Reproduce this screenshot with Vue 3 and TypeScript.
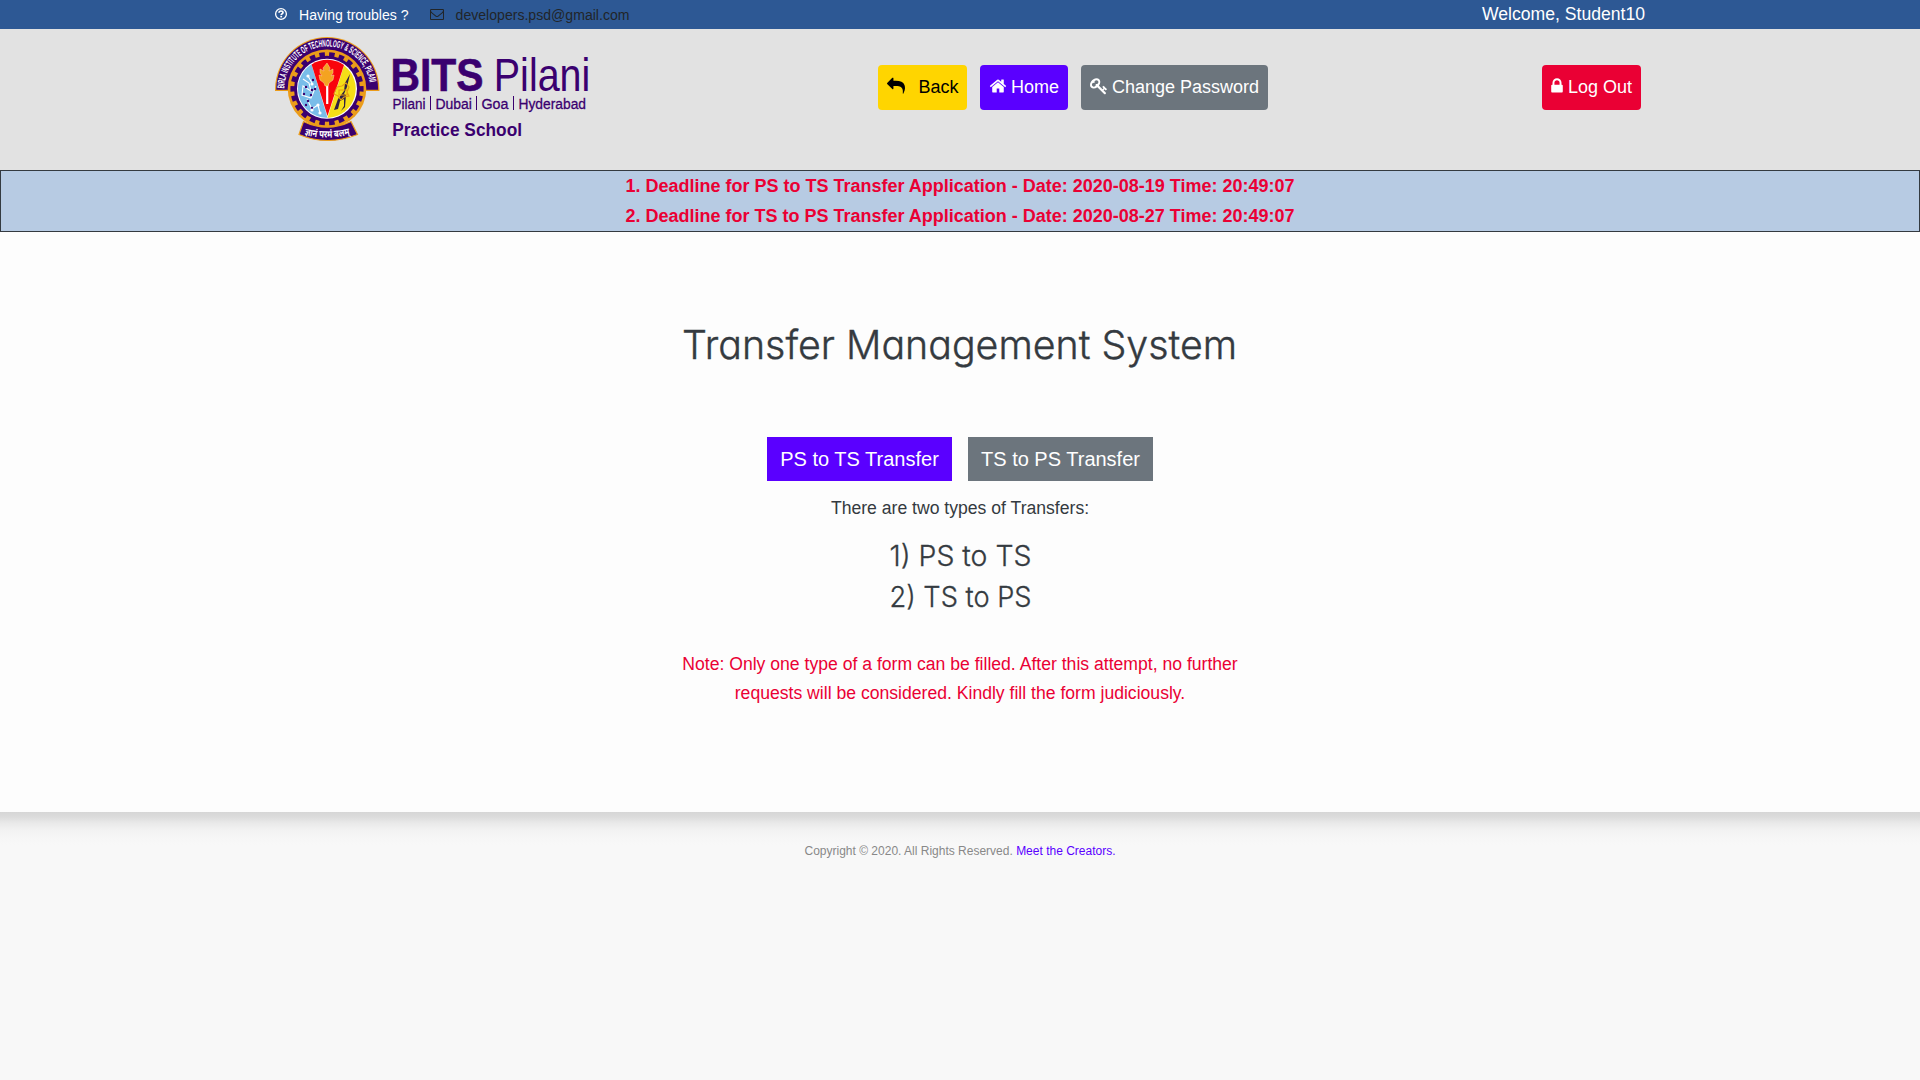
<script setup lang="ts">
interface NavButton {
  label: string
  icon: string
  kind: string
}

const icons = {
  reply:
    'M1792 1120q0 166-127 451-3 7-10.5 24t-13.5 30-13 22q-12 17-28 17-15 0-23.5-10t-8.5-25q0-9 2.5-26.5t2.5-23.5q5-68 5-123 0-101-17.5-181t-48.5-138.5-80-101-105.5-69.5-133-42.5-154-21.5-175.5-6h-224v256q0 26-19 45t-45 19-45-19l-512-512q-19-19-19-45t19-45l512-512q19-19 45-19t45 19 19 45v256h224q713 0 875 403 53 134 53 333z',
  home:
    'M1472 992v480q0 26-19 45t-45 19h-384v-384h-256v384h-384q-26 0-45-19t-19-45v-480q0-1 .5-3t.5-3l575-474 575 474q1 2 1 6zm223-69l-62 74q-8 9-21 11h-3q-13 0-21-7l-692-577-692 577q-12 8-24 7-13-2-21-11l-62-74q-8-10-7-23.5t11-21.5l719-599q32-26 76-26t76 26l244 204v-195q0-14 9-23t23-9h192q14 0 23 9t9 23v408l219 182q10 8 11 21.5t-7 23.5z',
  key:
    'M832 512q0-80-56-136t-136-56-136 56-56 136q0 42 19 83-41-19-83-19-80 0-136 56t-56 136 56 136 136 56 136-56 56-136q0-42-19-83 41 19 83 19 80 0 136-56t56-136zm851 704q0 17-49 66t-66 49q-9 0-28.5-16t-36.5-33-38.5-40-24.5-26l-96 96 220 220q28 28 28 68 0 42-39 81t-81 39q-40 0-68-28l-671-671q-176 131-365 131-163 0-265.5-102.5t-102.5-265.5q0-160 95-313t248-248 313-95q163 0 265.5 102.5t102.5 265.5q0 189-131 365l355 355 96-96q-3-3-26-24.5t-40-38.5-33-36.5-16-28.5q0-17 49-66t66-49q13 0 23 10 6 6 46 44.5t82 79.5 86.5 86 73 78 28.5 41z',
  lock:
    'M640 768h512v-192q0-106-75-181t-181-75-181 75-75 181v192zm832 96v576q0 40-28 68t-68 28h-960q-40 0-68-28t-28-68v-576q0-40 28-68t68-28h32v-192q0-184 132-316t316-132 316 132 132 316v192h32q40 0 68 28t28 68z',
  envelope:
    'M1664 1504v-768q-32 36-69 66-268 206-426 338-51 43-83 67t-86.5 48.5-102.5 24.5h-2q-48 0-102.5-24.5t-86.5-48.5-83-67q-158-132-426-338-37-30-69-66v768q0 13 9.5 22.5t22.5 9.5h1472q13 0 22.5-9.5t9.5-22.5zm0-1051v-24.5l-.5-13-3-12.5-5.5-9-9-7.5-14-2.5h-1472q-13 0-22.5 9.5t-9.5 22.5q0 168 147 284 193 152 401 317 6 5 35 29.5t46 37.5 44.5 31.5 50.5 27.5 43 9h2q20 0 43-9t50.5-27.5 44.5-31.5 46-37.5 35-29.5q208-165 401-317 54-43 100.5-115.5t46.5-131.5zm128-37v1088q0 66-47 113t-113 47h-1472q-66 0-113-47t-47-113v-1088q0-66 47-113t113-47h1472q66 0 113 47t47 113z',
}

const navButtons: NavButton[] = [
  { label: 'Back', icon: icons.reply, kind: 'back' },
  { label: 'Home', icon: icons.home, kind: 'home' },
  { label: 'Change Password', icon: icons.key, kind: 'password' },
]

const deadlines: string[] = [
  '1. Deadline for PS to TS Transfer Application - Date: 2020-08-19 Time: 20:49:07',
  '2. Deadline for TS to PS Transfer Application - Date: 2020-08-27 Time: 20:49:07',
]
</script>

<template>
  <div class="page">
    <div class="topbar">
      <div class="contact">
        <svg class="i-question" viewBox="0 0 14 14">
          <circle cx="7" cy="7" r="5.4" fill="none" stroke="currentColor" stroke-width="1.3" />
          <path d="M5 5.8C5.1 4.5 6 4 7 4c1.2 0 2 .7 2 1.6C9 6.8 7.2 6.8 7.2 8.1" fill="none" stroke="currentColor" stroke-width="1.7" />
          <rect x="6.3" y="8.8" width="1.8" height="1.6" fill="currentColor" />
        </svg>
        <span class="troubles">Having troubles ?</span>
        <svg class="i-mail" viewBox="0 0 1792 1792"><path :d="icons.envelope" fill="currentColor" /></svg>
        <span class="mail">developers.psd@gmail.com</span>
      </div>
      <span class="welcome">Welcome, Student10</span>
    </div>

    <header class="header">
      <svg class="logo" viewBox="275 36 320 107">
        <path d="M275 91V89.5A52.2 52.5 0 0 1 379.4 89.5V91Z" fill="#eb9c1a" />
        <path d="M276.3 89.8V89A50.9 51 0 0 1 378.1 89V89.8Z" fill="#3a006f" />
        <path id="motto-arc" d="M284.2 89.5A43 43 0 0 1 370.2 89.5" fill="none" />
        <text class="arc-text"><textPath href="#motto-arc" startOffset="1" textLength="127" lengthAdjust="spacingAndGlyphs">BIRLA INSTITUTE OF TECHNOLOGY &amp; SCIENCE, PILANI</textPath></text>
        <circle cx="327" cy="88.8" r="39.3" fill="#eb9c1a" />
        <circle cx="327" cy="88.8" r="33.8" fill="none" stroke="#3a006f" stroke-width="5.6" pathLength="220" stroke-dasharray="5.6 4.4" stroke-dashoffset="2.8" />
        <circle cx="327" cy="88.8" r="33" fill="#3a006f" />
        <circle cx="327" cy="88.8" r="30" fill="#fff" />
        <path d="M327.5 117.8L311.5 64.2A29 29 0 0 0 326 117.7Z" fill="#79bde9" />
        <path d="M327.5 117.8L344 65.5A29 29 0 0 1 329 117.7Z" fill="#f5df17" />
        <path d="M327.5 116L311.6 64.4A29 29 0 0 1 344 65Z" fill="#f9040c" />
        <path d="M327.2 83V104" stroke="#fff" stroke-width="2.2" />
        <path d="M327 63l3 5-1 3 4-2v4l-2 3 3-1-1 5-4 3-1 3h-3l-1-3-4-3-1-5 3 1-2-3v-4l4 2-1-3z" fill="#f4a321" stroke="#fbd9a0" stroke-width=".5" />
        <path d="M303 79l6 4 2 8-8-5-1 9 9 3 5-12M308 76l4 7M307 99l5 10 6-4 2 8" fill="none" stroke="#fff" stroke-width="1.1" />
        <g fill="#3a006f"><circle cx="313" cy="80" r="1.2" /><circle cx="306" cy="87" r="1.2" /><circle cx="312" cy="90" r="1.3" /><circle cx="304" cy="94" r="1.2" /><circle cx="311" cy="95" r="1.2" /><circle cx="308" cy="101" r="1.2" /><circle cx="306" cy="105" r="1.2" /><circle cx="315" cy="89" r="1.2" /><circle cx="312" cy="108" r="1.2" /></g>
        <g fill="#fff"><circle cx="308" cy="76" r="1.6" /><circle cx="312" cy="84" r="1.6" /><circle cx="318" cy="105" r="1.6" /><circle cx="312" cy="110" r="1.6" /><circle cx="320" cy="113" r="1.6" /></g>
        <path d="M350 74l-5 9-1 8-6 8-4 11 4-1 2-8 4-2 0 7-3 5 4-4 1-12-2-1 3-7z" fill="#302143" />
        <path d="M337 87l5-1 4-3 3 4-2 5 2 4-5 1-3 3-3-4-4-2z M339 90h8v5h-8z" fill="none" stroke="#e69e12" stroke-width="1.1" />
        <path d="M303.500 121.5Q327 133 351 121.5L357.5 134.5Q327 146.5 299 134.5Z" fill="#3a006f" stroke="#eb9c1a" stroke-width="1.2" />
        <path id="banner-arc" d="M301.5 134Q327 141.5 354 133.5" fill="none" />
        <text class="banner-text"><textPath href="#banner-arc" startOffset="3" textLength="46" lengthAdjust="spacingAndGlyphs">ज्ञानं परमं बलम्</textPath></text>
        <g fill="#3a006f">
          <text x="390.500" y="91.2" font-size="45.5" font-weight="700" textLength="93" lengthAdjust="spacingAndGlyphs" class="bits">BITS</text>
          <text x="493.8" y="91.2" font-size="45.5" textLength="96.5" lengthAdjust="spacingAndGlyphs">Pilani</text>
          <text x="392.5" y="108.7" font-size="15.5" textLength="33" lengthAdjust="spacingAndGlyphs" class="city">Pilani</text>
          <text x="435.400" y="108.7" font-size="15.5" textLength="36.5" lengthAdjust="spacingAndGlyphs" class="city">Dubai</text>
          <text x="481.5" y="108.7" font-size="15.5" textLength="27" lengthAdjust="spacingAndGlyphs" class="city">Goa</text>
          <text x="518.500" y="108.7" font-size="15.5" textLength="67.500" lengthAdjust="spacingAndGlyphs" class="city">Hyderabad</text>
          <text x="392.3" y="136.4" font-size="18" font-weight="700" textLength="129.7" lengthAdjust="spacingAndGlyphs">Practice School</text>
        </g>
        <path d="M430.5 96v14M476.5 96v14M513.5 96v14" stroke="#3a006f" stroke-width="1" />
      </svg>

      <nav class="nav">
        <button v-for="b in navButtons" :key="b.kind" class="btn" :class="b.kind">
          <svg class="icon" viewBox="0 0 1792 1792"><path :d="b.icon" fill="currentColor" /></svg>
          <span>{{ b.label }}</span>
        </button>
      </nav>

      <button class="btn logout">
        <svg class="icon" viewBox="320 0 1152 1792"><path :d="icons.lock" fill="currentColor" /></svg>
        <span>Log Out</span>
      </button>
    </header>

    <div class="deadlines">
      <div v-for="d in deadlines" :key="d">{{ d }}</div>
    </div>

    <main class="main">
      <h1><svg width="556" height="60"><text x="0" y="42" textLength="555" lengthAdjust="spacingAndGlyphs">Transfer Management System</text></svg></h1>
      <div class="actions">
        <button class="to-ts">PS to TS Transfer</button>
        <button class="to-ps">TS to PS Transfer</button>
      </div>
      <p class="intro">There are two types of Transfers:</p>
      <h3>
        <svg width="144" height="41"><text x="1.5" y="29" textLength="142" lengthAdjust="spacingAndGlyphs">1) PS to TS</text></svg>
        <svg width="144" height="41"><text x="1.5" y="29" textLength="142" lengthAdjust="spacingAndGlyphs">2) TS to PS</text></svg>
      </h3>
      <p class="note">Note: Only one type of a form can be filled. After this attempt, no further<br />requests will be considered. Kindly fill the form judiciously.</p>
    </main>

    <footer class="footer">
      Copyright © 2020. All Rights Reserved. <a>Meet the Creators.</a>
    </footer>
  </div>
</template>

<style>
body {
  margin: 0;
  background: #f8f8f8;
}
</style>

<style scoped>
.page {
  width: 1920px;
  height: 1080px;
  overflow: hidden;
  display: flex;
  flex-direction: column;
  font-family: "Liberation Sans", Arial, sans-serif;
  font-size: 17.6px;
  color: #343a40;
}
.page * {
  box-sizing: border-box;
}
.topbar {
  height: 29px;
  flex: none;
  padding: 0 275px 0 274.5px;
  display: flex;
  justify-content: space-between;
  background: #2d5894;
  color: #fff;
}
.contact {
  display: flex;
  font-size: 14.08px;
  line-height: 30px;
}
.i-question {
  width: 14px;
  height: 14px;
  margin: 7px 11px 0 -0.5px;
}
.i-mail {
  width: 14px;
  height: 14px;
  margin: 7px 12px 0 21px;
  color: #212529;
}
.mail {
  color: #212529;
}
.welcome {
  line-height: 28px;
}
.header {
  height: 141px;
  flex: none;
  display: flex;
  align-items: flex-start;
  background: #e2e2e2;
}
.logo {
  width: 320px;
  height: 107px;
  margin: 7px 283px 0 275px;
  flex: none;
}
.arc-text {
  font: 700 10px "Liberation Sans Narrow", "Liberation Sans", sans-serif;
  fill: #fff;
}
.banner-text {
  font: 700 10px "Noto Sans Devanagari", "Noto Sans", sans-serif;
  fill: #fff;
}
.bits {
  stroke: #3a006f;
  stroke-width: 0.6px;
}
.city {
  stroke: #3a006f;
  stroke-width: 0.3px;
}
.nav {
  display: flex;
  gap: 13px;
  margin-top: 36px;
}
button {
  border: 0;
  padding: 0;
  font-family: inherit;
  color: #fff;
}
.btn {
  height: 45px;
  display: flex;
  align-items: flex-start;
  padding-left: 9px;
  border-radius: 4px;
  font-size: 18px;
  line-height: 44px;
  white-space: nowrap;
}
.icon {
  width: 18px;
  height: 18px;
  margin: 12px 4px 0 0;
}
.back {
  width: 89px;
  background: #ffd500;
  color: #000;
}
.back .icon {
  margin-right: 13.5px;
}
.home {
  width: 88px;
  background: #5a00ff;
}
.password {
  width: 187px;
  background: #6c757d;
}
.logout {
  width: 99px;
  margin: 36px 0 0 274px;
  background: #ea0034;
}
.logout .icon {
  width: 12px;
  margin-right: 5px;
}
.deadlines {
  height: 62px;
  flex: none;
  border: 1px solid #343a40;
  background: #b7cbe3;
  color: #ea0034;
  font-weight: 700;
  font-size: 18px;
  line-height: 30px;
  text-align: center;
}
.main {
  height: 580px;
  flex: none;
  display: flex;
  flex-direction: column;
  align-items: center;
  background: #fdfdfd;
}
h1,
h3,
p {
  margin: 0;
  font-weight: 400;
}
h1 {
  height: 60px;
  margin-top: 85px;
}
h1 svg,
h3 svg {
  display: block;
  overflow: visible;
  fill: #343a40;
  stroke: #343a40;
  font-family: Muli, Inter, sans-serif;
  font-weight: 350;
  font-feature-settings: "cv11";
}
h1 svg {
  font-size: 40px;
  stroke-width: 0.4px;
}
h3 svg {
  font-size: 28px;
  stroke-width: 0.3px;
}
.actions {
  display: flex;
  gap: 16px;
  margin-top: 60px;
}
.actions button {
  width: 185px;
  height: 44px;
  font-size: 20px;
  line-height: 44px;
}
.to-ts {
  background: #5a00ff;
}
.to-ps {
  background: #6c757d;
}
.intro {
  margin-top: 12px;
  line-height: 30px;
}
h3 {
  margin-top: 14px;
}
.note {
  margin-top: 31px;
  line-height: 29px;
  text-align: center;
  color: #ea0034;
}
.footer {
  flex: 1;
  padding-top: 31px;
  font-size: 12px;
  line-height: 16px;
  text-align: center;
  color: #888;
  background: linear-gradient(#d6d6d6 0, #dcdcdc 5px, #e9e9e9 11px, #f2f2f2 18px, #f6f6f6 25px, #f8f8f8 33px);
}
.footer a {
  color: #5a00ff;
}
</style>
